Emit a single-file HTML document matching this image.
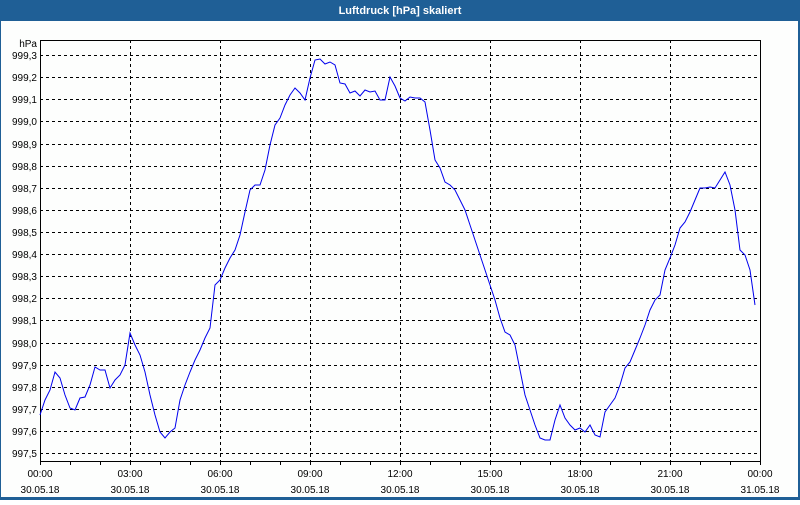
<!DOCTYPE html>
<html><head><meta charset="utf-8"><style>
body{margin:0;width:800px;height:500px;overflow:hidden;background:#fff;font-family:"Liberation Sans",sans-serif}
</style></head><body>
<svg width="800" height="500" xmlns="http://www.w3.org/2000/svg" font-family="Liberation Sans, sans-serif" font-size="10">
<rect x="0" y="0" width="800" height="500" fill="#1f5f96"/>
<rect x="1" y="21" width="797" height="476" fill="#fdfefd"/>
<text x="400" y="14" fill="#fff" font-weight="bold" font-size="11" text-anchor="middle">Luftdruck [hPa] skaliert</text>
<g stroke="#000" stroke-dasharray="3,3" stroke-width="1">
<line x1="40" x2="760" y1="55.5" y2="55.5"/><line x1="40" x2="760" y1="77.5" y2="77.5"/><line x1="40" x2="760" y1="99.5" y2="99.5"/><line x1="40" x2="760" y1="121.5" y2="121.5"/><line x1="40" x2="760" y1="144.5" y2="144.5"/><line x1="40" x2="760" y1="166.5" y2="166.5"/><line x1="40" x2="760" y1="188.5" y2="188.5"/><line x1="40" x2="760" y1="210.5" y2="210.5"/><line x1="40" x2="760" y1="232.5" y2="232.5"/><line x1="40" x2="760" y1="254.5" y2="254.5"/><line x1="40" x2="760" y1="276.5" y2="276.5"/><line x1="40" x2="760" y1="298.5" y2="298.5"/><line x1="40" x2="760" y1="320.5" y2="320.5"/><line x1="40" x2="760" y1="343.5" y2="343.5"/><line x1="40" x2="760" y1="365.5" y2="365.5"/><line x1="40" x2="760" y1="387.5" y2="387.5"/><line x1="40" x2="760" y1="409.5" y2="409.5"/><line x1="40" x2="760" y1="431.5" y2="431.5"/><line x1="40" x2="760" y1="453.5" y2="453.5"/>
<line x1="130.5" x2="130.5" y1="40" y2="461"/><line x1="220.5" x2="220.5" y1="40" y2="461"/><line x1="310.5" x2="310.5" y1="40" y2="461"/><line x1="400.5" x2="400.5" y1="40" y2="461"/><line x1="490.5" x2="490.5" y1="40" y2="461"/><line x1="580.5" x2="580.5" y1="40" y2="461"/><line x1="670.5" x2="670.5" y1="40" y2="461"/>
</g>
<rect x="40.5" y="40.5" width="720" height="421" fill="none" stroke="#000"/>
<g stroke="#000"><path d="M70.5 461v4M100.5 461v4M130.5 461v4M160.5 461v4M190.5 461v4M220.5 461v4M250.5 461v4M280.5 461v4M310.5 461v4M340.5 461v4M370.5 461v4M400.5 461v4M430.5 461v4M460.5 461v4M490.5 461v4M520.5 461v4M550.5 461v4M580.5 461v4M610.5 461v4M640.5 461v4M670.5 461v4M700.5 461v4M730.5 461v4M760.5 461v4M40.5 461v4"/></g>
<polyline fill="none" stroke="#0000ee" stroke-width="1" points="40,415 45,400 50,390 55,372 60,378 65,395 70,408 75,410 80,398 85,397 90,385 95,367 100,370 105,370 110,388 115,380 120,375 125,365 130,333 135,345 140,355 145,372 150,395 155,415 160,432 165,438 170,432 175,428 180,400 185,385 190,372 195,360 200,350 205,338 210,328 215,285 220,280 225,268 230,258 235,250 240,235 245,212 250,190 255,185 260,185 265,170 270,145 275,125 280,118 285,105 290,95 295,88 300,93 305,100 310,78 315,60 320,59 325,64 330,62 335,65 340,83 345,84 350,93 355,91 360,96 365,90 370,92 375,91 380,100 385,100 390,77 395,86 400,98 405,101 410,97 415,98 420,98 425,102 430,130 435,160 440,168 445,182 450,185 455,190 460,200 465,210 470,225 475,240 480,255 485,270 490,285 495,300 500,318 505,332 510,335 515,345 520,370 525,395 530,410 535,425 540,438 545,440 550,440 555,420 560,405 565,418 570,425 575,430 580,428 585,432 590,425 595,435 600,437 605,412 610,405 615,398 620,385 625,368 630,362 635,350 640,338 645,325 650,310 655,300 660,295 665,270 670,258 675,245 680,228 685,222 690,212 695,200 700,188 705,188 710,187 715,188 720,180 725,172 730,185 735,210 740,250 745,255 750,270 755,305"/>
<g fill="#000" text-anchor="end">
<text x="37" y="47">hPa</text>
<text x="37" y="59">999,3</text><text x="37" y="81">999,2</text><text x="37" y="103">999,1</text><text x="37" y="125">999,0</text><text x="37" y="148">998,9</text><text x="37" y="170">998,8</text><text x="37" y="192">998,7</text><text x="37" y="214">998,6</text><text x="37" y="236">998,5</text><text x="37" y="258">998,4</text><text x="37" y="280">998,3</text><text x="37" y="302">998,2</text><text x="37" y="324">998,1</text><text x="37" y="347">998,0</text><text x="37" y="369">997,9</text><text x="37" y="391">997,8</text><text x="37" y="413">997,7</text><text x="37" y="435">997,6</text><text x="37" y="457">997,5</text>
</g>
<g fill="#000" text-anchor="middle">
<text x="40" y="477">00:00</text><text x="40" y="493">30.05.18</text>
<text x="130" y="477">03:00</text><text x="130" y="493">30.05.18</text>
<text x="220" y="477">06:00</text><text x="220" y="493">30.05.18</text>
<text x="310" y="477">09:00</text><text x="310" y="493">30.05.18</text>
<text x="400" y="477">12:00</text><text x="400" y="493">30.05.18</text>
<text x="490" y="477">15:00</text><text x="490" y="493">30.05.18</text>
<text x="580" y="477">18:00</text><text x="580" y="493">30.05.18</text>
<text x="670" y="477">21:00</text><text x="670" y="493">30.05.18</text>
<text x="760" y="477">00:00</text><text x="760" y="493">31.05.18</text>
</g>
</svg>
</body></html>
